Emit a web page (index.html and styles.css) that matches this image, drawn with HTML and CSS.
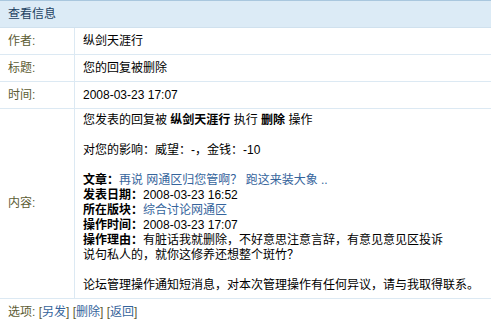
FILE: index.html
```html
<!DOCTYPE html>
<html lang="zh-CN">
<head>
    <meta charset="UTF-8">
    <title>查看信息</title>
    <link rel="stylesheet" href="styles.css">
</head>
<body>

<table class="msg-table">
    <tr>
        <th class="msg-head" colspan="2">查看信息</th>
    </tr>
    <tr>
        <td class="label">作者:</td>
        <td class="value">纵剑天涯行</td>
    </tr>
    <tr>
        <td class="label">标题:</td>
        <td class="value">您的回复被删除</td>
    </tr>
    <tr>
        <td class="label">时间:</td>
        <td class="value">2008-03-23 17:07</td>
    </tr>
    <tr>
        <td class="label">内容:</td>
        <td class="value content">
            您发表的回复被 <b>纵剑天涯行</b> 执行 <b>删除</b> 操作<br><br>
            对您的影响：威望：-，金钱：-10<br><br>
            <b>文章：</b><a href="#">再说 网通区归您管啊？ 跑这来装大象 ..</a><br>
            <b>发表日期：</b>2008-03-23 16:52<br>
            <b>所在版块：</b><a href="#">综合讨论网通区</a><br>
            <b>操作时间：</b>2008-03-23 17:07<br>
            <b>操作理由：</b>有脏话我就删除，不好意思注意言辞，有意见意见区投诉<br>
            说句私人的，就你这修养还想整个斑竹？<br><br>
            论坛管理操作通知短消息，对本次管理操作有任何异议，请与我取得联系。
        </td>
    </tr>
    <tr>
        <td class="options" colspan="2">
            选项: [<a href="#">另发</a>] [<a href="#">删除</a>] [<a href="#">返回</a>]
        </td>
    </tr>
</table>

</body>
</html>
```

FILE: styles.css
```css
body {
    margin: 0;
    font-family: "Liberation Sans", "Noto Sans CJK SC", sans-serif;
    font-size: 12px;
    color: #000;
    background: #fff;
}
.msg-table {
    width: 100%;
    border-collapse: collapse;
    border-top: 1px solid #a9c7de;
    border-bottom: 2px solid #a9c7de;
}
.msg-table td,
.msg-table th {
    padding: 0 8px;
    height: 26px;
    line-height: 15px;
    border-bottom: 1px solid #dce9f3;
}
.msg-head {
    text-align: left;
    font-weight: normal;
    color: #1d4262;
    background: #dcebf6;
    border-bottom: 1px solid #d0e1ee !important;
}
.label {
    width: 58px;
    color: #5c5c33;
    border-right: 1px solid #dce9f3;
}
.content {
    padding: 4px 8px 5px !important;
}
a {
    color: #35649c;
    text-decoration: none;
}
.options {
    color: #5c5c33;
}
```
